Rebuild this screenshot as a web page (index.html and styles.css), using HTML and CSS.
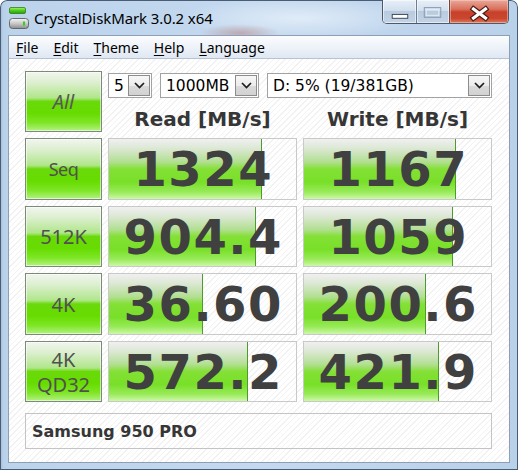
FILE: index.html
```html
<!DOCTYPE html>
<html>
<head>
<meta charset="utf-8">
<title>CrystalDiskMark 3.0.2 x64</title>
<link rel="stylesheet" href="styles.css">
</head>
<body>
<div class="window">
  <div class="titlebar">
    <svg class="app-icon" width="22" height="24" viewBox="0 0 22 24">
      <defs>
        <linearGradient id="gg" x1="0" y1="0" x2="0" y2="1">
          <stop offset="0" stop-color="#a8f56a"/>
          <stop offset="0.5" stop-color="#4ccc1c"/>
          <stop offset="1" stop-color="#2a9a10"/>
        </linearGradient>
        <linearGradient id="gb" x1="0" y1="0" x2="0" y2="1">
          <stop offset="0" stop-color="#f6f6f6"/>
          <stop offset="0.5" stop-color="#c8c8c8"/>
          <stop offset="1" stop-color="#8c8c8c"/>
        </linearGradient>
      </defs>
      <rect x="1.5" y="1.5" width="16" height="6" rx="1.5" fill="url(#gg)" stroke="#2f7f14" stroke-width="0.8"/>
      <rect x="1.5" y="12.5" width="19" height="10" rx="3" fill="url(#gb)" stroke="#5e5e5e" stroke-width="0.9"/>
      <rect x="15" y="15.5" width="2" height="4" fill="#2ed21a"/>
    </svg>
    <span class="title">CrystalDiskMark 3.0.2 x64</span>
    <div class="caption-btns">
      <div class="cbtn cmin">
        <svg width="34" height="23" viewBox="0 0 34 23"><rect x="9.5" y="14.5" width="16" height="4" fill="#fff" stroke="#3a4656" stroke-width="1"/></svg>
      </div>
      <div class="cbtn cmax">
        <svg width="33" height="23" viewBox="0 0 33 23"><rect x="7.5" y="7.5" width="17" height="10" fill="none" stroke="#8898aa" stroke-width="1"/><rect x="9.5" y="9.5" width="13" height="6" fill="none" stroke="#e4ecf4" stroke-width="1"/></svg>
      </div>
      <div class="cbtn cclose">
        <svg width="58" height="23" viewBox="0 0 58 23"><path d="M23.5 9 L35.5 18 M35.5 9 L23.5 18" stroke="#4a1a14" stroke-width="5.5" stroke-linecap="square"/><path d="M23.5 9 L35.5 18 M35.5 9 L23.5 18" stroke="#ffffff" stroke-width="3.2" stroke-linecap="square"/></svg>
      </div>
    </div>
  </div>
  <div class="client">
    <div class="menubar">
      <span class="menu-item"><u>F</u>ile</span>
      <span class="menu-item"><u>E</u>dit</span>
      <span class="menu-item"><u>T</u>heme</span>
      <span class="menu-item"><u>H</u>elp</span>
      <span class="menu-item"><u>L</u>anguage</span>
    </div>
    <div class="content">
      <div class="grid">
        <div class="btn btn-all">All</div>
        <div class="controls">
          <div class="selects">
            <div class="sel sel-count"><span>5</span><span class="arrow"><svg width="11" height="7" viewBox="0 0 11 7"><path d="M1 1 L5.5 5.5 L10 1" fill="none" stroke="#1e1e1e" stroke-width="1.7"/></svg></span></div>
            <div class="sel sel-size"><span>1000MB</span><span class="arrow"><svg width="11" height="7" viewBox="0 0 11 7"><path d="M1 1 L5.5 5.5 L10 1" fill="none" stroke="#1e1e1e" stroke-width="1.7"/></svg></span></div>
            <div class="sel sel-drive"><span>D: 5% (19/381GB)</span><span class="arrow"><svg width="11" height="7" viewBox="0 0 11 7"><path d="M1 1 L5.5 5.5 L10 1" fill="none" stroke="#1e1e1e" stroke-width="1.7"/></svg></span></div>
          </div>
          <div class="headers">
            <div class="header">Read [MB/s]</div>
            <div class="header">Write [MB/s]</div>
          </div>
        </div>

        <div class="btn btn-seq">Seq</div>
        <div class="cell"><div class="bar" style="width:81.8%"></div><span class="val">1324</span></div>
        <div class="cell"><div class="bar" style="width:81.3%"></div><span class="val">1167</span></div>

        <div class="btn">512K</div>
        <div class="cell"><div class="bar" style="width:78.6%"></div><span class="val">904.4</span></div>
        <div class="cell"><div class="bar" style="width:79.7%"></div><span class="val">1059</span></div>

        <div class="btn">4K</div>
        <div class="cell"><div class="bar" style="width:50.3%"></div><span class="val">36.60</span></div>
        <div class="cell"><div class="bar" style="width:65.2%"></div><span class="val">200.6</span></div>

        <div class="btn btn-two">4K<br>QD32</div>
        <div class="cell"><div class="bar" style="width:74.3%"></div><span class="val">572.2</span></div>
        <div class="cell"><div class="bar" style="width:72.2%"></div><span class="val">421.9</span></div>

        <div class="comment">Samsung 950 PRO</div>
      </div>
    </div>
  </div>
</div>
</body>
</html>
```
FILE: styles.css
```css
* { box-sizing: border-box; }
html, body { margin: 0; padding: 0; background: #ffffff; }
body {
  width: 518px;
  height: 470px;
  overflow: hidden;
  font-family: "Noto Sans", "DejaVu Sans", sans-serif;
}

.window {
  width: 518px;
  height: 470px;
  display: flex;
  flex-direction: column;
  border-radius: 7px 7px 0 0;
  background:
    radial-gradient(ellipse 40px 9px at 240px 33px, rgba(176, 110, 104, 0.45), rgba(176, 110, 104, 0) 100%),
    radial-gradient(ellipse 120px 20px at 300px 18px, rgba(236, 244, 252, 0.7), rgba(236, 244, 252, 0) 100%),
    linear-gradient(to right, #9cb6d2 0px, #b9d0ea 3px, #bcd3ec 8px, #c4d9ef 50%, #bad1ea 100%);
  box-shadow: inset 0 0 0 1px #4b5d73;
}

/* ---------- Title bar ---------- */
.titlebar {
  height: 35px;
  flex: none;
  display: flex;
  align-items: flex-start;
}
.app-icon {
  margin-left: 8px;
  margin-top: 6px;
  flex: none;
}
.title {
  margin-left: 4px;
  padding-top: 8px;
  font-size: 15px;
  line-height: 20px;
  color: #000;
  letter-spacing: -0.1px;
}
.caption-btns {
  margin-left: auto;
  margin-right: 9px;
  display: flex;
  height: 24px;
  border: 1px solid #4e5a6a;
  border-top: none;
  border-radius: 0 0 5px 5px;
  overflow: hidden;
}
.cbtn { height: 23px; display: flex; }
.cbtn svg { display: block; }
.cmin, .cmax {
  background: linear-gradient(#e8eff8 0%, #d3e0ef 45%, #b9cbe0 50%, #c2d3e6 100%);
  box-shadow: inset 0 0 0 1px rgba(255, 255, 255, 0.55);
}
.cmin { width: 34px; border-right: 1px solid #6d7d92; }
.cmax { width: 33px; border-right: 1px solid #6d4a44; }
.cclose {
  width: 58px;
  background: linear-gradient(#e9a89a 0%, #d9705c 40%, #c7412a 52%, #c9462e 80%, #de7a5c 100%);
  box-shadow: inset 0 0 0 1px rgba(255, 220, 210, 0.45);
}

/* ---------- Client ---------- */
.client {
  flex: 1;
  margin: 0 8px 7px 8px;
  border: 1px solid #8e9fb5;
  display: flex;
  flex-direction: column;
  background: #fff;
}
.menubar {
  height: 23px;
  flex: none;
  display: flex;
  align-items: center;
  gap: 15px;
  padding-left: 7px;
  background: linear-gradient(#fbfcfe 0%, #eef3f9 50%, #dfe7f2 100%);
  border-bottom: 1px solid #b6c3d4;
  font-size: 14px;
  color: #000;
}
.menu-item u { text-decoration: underline; text-underline-offset: 2px; }

.content {
  flex: 1;
  padding: 12px 0 0 16px;
  background: repeating-linear-gradient(135deg, #ffffff 0px, #ffffff 3px, #f2f2f2 3px, #f2f2f2 4px);
}

.grid {
  display: grid;
  grid-template-columns: 77px 189px 189px;
  grid-template-rows: 61px 62px 61px 62px 61px 36px;
  column-gap: 6px;
  row-gap: 6px;
}

/* ---------- Buttons ---------- */
.btn {
  border: 1px solid #7b8a79;
  background: linear-gradient(#f2f5ef 0%, #dcefcf 18%, #b0e68a 44%, #6ad90a 50%, #66dc00 70%, #7ee626 86%, #b4f184 100%);
  box-shadow: inset 0 0 0 1px rgba(255, 255, 255, 0.55);
  display: flex;
  align-items: center;
  justify-content: center;
  text-align: center;
  font-family: "Noto Sans", sans-serif;
  font-size: 20px;
  color: #505050;
  line-height: 25px;
}
.btn-all { font-style: italic; color: #585858; }
.btn-seq { font-size: 18px; letter-spacing: -0.5px; }
.btn-two { line-height: 25px; }

/* ---------- Selects & headers ---------- */
.controls {
  grid-column: 2 / 4;
  display: flex;
  flex-direction: column;
}
.selects {
  margin-top: 2px;
  display: flex;
  gap: 8px;
}
.sel {
  height: 25px;
  border: 1px solid #a2a2a2;
  background: #fff;
  display: flex;
  align-items: center;
  padding-left: 5px;
  font-family: "DejaVu Sans", sans-serif;
  font-size: 15.5px;
  color: #000;
}
.sel-count { width: 44px; }
.sel-size { width: 99px; }
.sel-drive { width: 225px; }
.arrow {
  margin-left: auto;
  margin-right: 1px;
  width: 22px;
  height: 21px;
  border: 1px solid #8c8c8c;
  background: linear-gradient(#f7f7f7 0%, #ececec 50%, #dadada 51%, #d2d2d2 100%);
  display: flex;
  align-items: center;
  justify-content: center;
}
.arrow svg { display: block; }

.headers {
  margin-top: 9px;
  display: grid;
  grid-template-columns: 189px 189px;
  column-gap: 6px;
}
.header {
  text-align: center;
  font-family: "DejaVu Sans", sans-serif;
  font-weight: bold;
  font-size: 20px;
  line-height: 24px;
  color: #363636;
}

/* ---------- Result cells ---------- */
.cell {
  position: relative;
  border: 1px solid #c9c9c9;
  display: flex;
  align-items: center;
  justify-content: center;
}
.bar {
  position: absolute;
  left: 0;
  top: 0;
  bottom: 0;
  background: linear-gradient(#f0f0f0 0%, #dde8d6 15%, #b2df92 38%, #84e036 50%, #78e028 72%, #98ea58 88%, #ccf8a8 100%);
  border-right: 1px solid #4f9a2c;
}
.val {
  position: relative;
  font-family: "DejaVu Sans", sans-serif;
  font-weight: bold;
  font-size: 48px;
  line-height: 48px;
  letter-spacing: 1.5px;
  padding-left: 1.5px;
  color: #404040;
}

/* ---------- Comment ---------- */
.comment {
  grid-column: 1 / 4;
  margin-top: 5px;
  height: 36px;
  border: 1px solid #c4c4c4;
  display: flex;
  align-items: center;
  padding-left: 6px;
  font-family: "DejaVu Sans", sans-serif;
  font-weight: bold;
  font-size: 16px;
  color: #363636;
}
```
